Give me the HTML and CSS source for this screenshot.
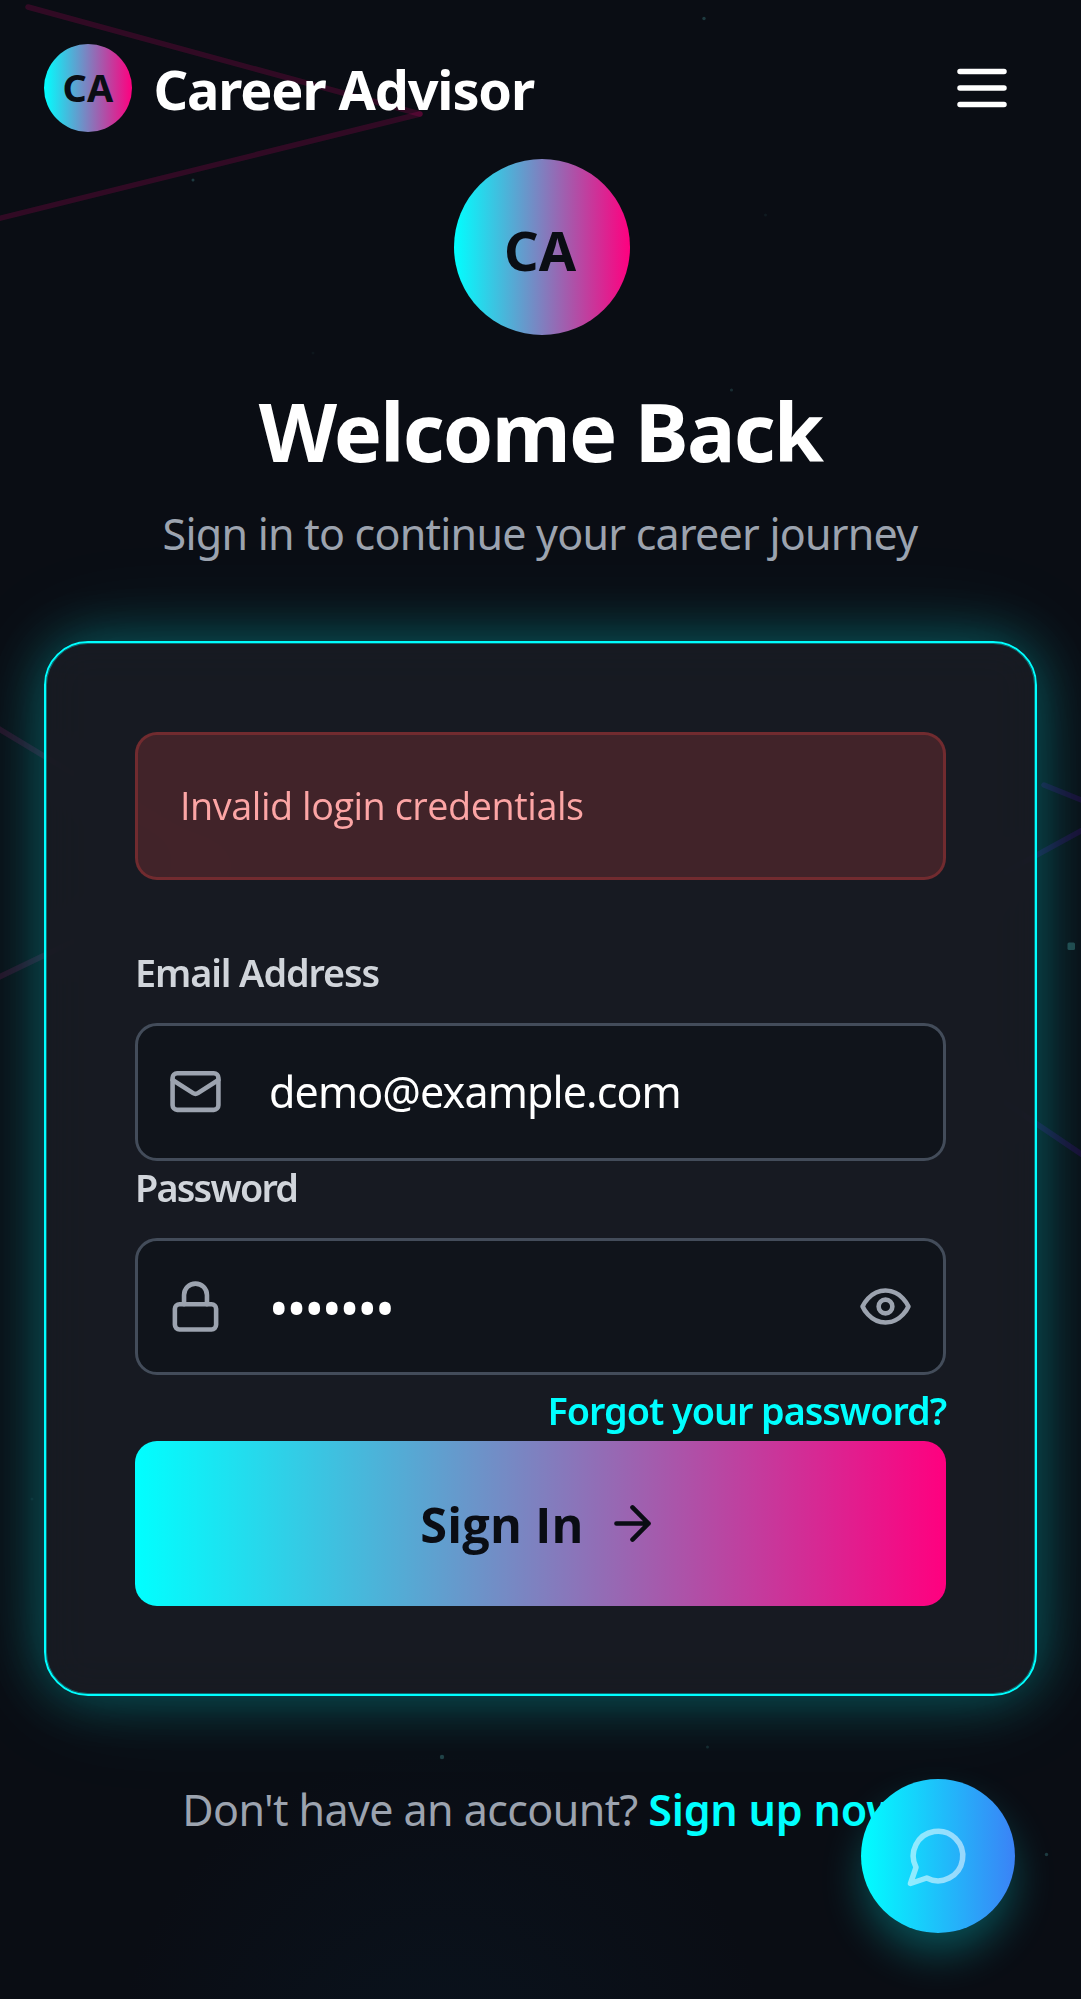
FILE: index.html
```html
<!DOCTYPE html>
<html lang="en">
<head>
<meta charset="utf-8">
<title>Career Advisor</title>
<link rel="stylesheet" href="styles.css">
</head>
<body>
<svg class="backdrop" viewBox="0 0 1081 1999" aria-hidden="true">
  <defs>
    <radialGradient id="floor" cx="442" cy="2080" r="330" gradientUnits="userSpaceOnUse">
      <stop offset="0" stop-color="#083250" stop-opacity=".16"/>
      <stop offset="1" stop-color="#083250" stop-opacity="0"/>
    </radialGradient>
  </defs>
  <rect width="1081" height="1999" fill="url(#floor)"/>
  <g fill="none" stroke-width="5.500" stroke-linecap="round">
    <path d="M28 7 420 114" stroke="#ff007f" stroke-opacity=".16"/>
    <path d="M-5 219.5 420 114" stroke="#ff007f" stroke-opacity=".16"/>
    <path d="M-5 726.5 228 867 -5 979" stroke="#d0208f" stroke-opacity=".14"/>
    <path d="M1044 785 1090 803.500M1090 826 817 975 1090 1160" stroke="#8000ff" stroke-opacity=".13"/>
  </g>
  <g fill="#5cc4c4">
    <rect x="1067.500" y="942.500" width="7.500" height="7.500" rx="1.500" fill-opacity=".3"/>
    <circle cx="704" cy="18.500" r="1.700" fill-opacity=".25"/>
    <circle cx="193" cy="180" r="1.500" fill-opacity=".25"/>
    <circle cx="765.500" cy="215" r="1.500" fill-opacity=".08"/>
    <circle cx="731.500" cy="390" r="1.600" fill-opacity=".18"/>
    <circle cx="313" cy="353" r="1.500" fill-opacity=".05"/>
    <circle cx="32" cy="1499" r="1.500" fill-opacity=".08"/>
    <circle cx="442" cy="1757" r="2.200" fill-opacity=".28"/>
    <circle cx="707.500" cy="1747" r="1.500" fill-opacity=".15"/>
    <circle cx="1046.500" cy="1854.500" r="1.700" fill-opacity=".25"/>
  </g>
</svg>

<header class="topbar">
  <a class="brand">
    <span class="badge badge-small">CA</span>
    <span class="brand-name">Career Advisor</span>
  </a>
  <button class="menu-button" aria-label="Menu">
    <svg class="icon-large" viewBox="0 0 24 24"><path d="M4 6h16M4 12h16M4 18h16"/></svg>
  </button>
</header>

<main class="page">
  <section class="hero">
    <div class="badge badge-large">CA</div>
    <h1 class="title">Welcome Back</h1>
    <p class="subtitle">Sign in to continue your career journey</p>
  </section>

  <form class="card">
    <div class="alert">Invalid login credentials</div>

    <label class="label">Email Address</label>
    <div class="field">
      <svg class="icon" viewBox="0 0 24 24"><rect x="2" y="4" width="20" height="16" rx="2"/><path d="m22 7-8.970 5.700a1.940 1.940 0 0 1-2.060 0L2 7"/></svg>
      <span class="value">demo@example.com</span>
    </div>

    <label class="label label-password">Password</label>
    <div class="field">
      <svg class="icon" viewBox="0 0 24 24"><rect x="3" y="11" width="18" height="11" rx="2"/><path d="M7 11V7a5 5 0 0 1 10 0v4"/></svg>
      <span class="value value-masked">•••••••</span>
      <svg class="icon" viewBox="0 0 24 24"><path d="M2 12s3-7 10-7 10 7 10 7-3 7-10 7-10-7-10-7Z"/><circle cx="12" cy="12" r="3"/></svg>
    </div>

    <a class="forgot">Forgot your password?</a>

    <button class="submit" type="button">
      <span>Sign In</span>
      <svg class="icon" viewBox="0 0 24 24"><path d="M5 12h14M12 5l7 7-7 7"/></svg>
    </button>
  </form>

  <p class="signup">Don't have an account? <a class="signup-link">Sign up now</a></p>
</main>

<button class="chat" aria-label="Chat">
  <svg class="icon-large" viewBox="0 0 24 24"><path d="M7.900 20A9 9 0 1 0 4 16.100L2 22Z"/></svg>
</button>
</body>
</html>
```

FILE: styles.css
```css
* {
  box-sizing: border-box;
}

body {
  position: relative;
  height: 1999px;
  margin: 0;
  overflow: hidden;
  background: #0a0d14;
  color: #fff;
  font-family: "Noto Sans", sans-serif;
}

h1,
p {
  margin: 0;
}

button {
  border: 0;
  padding: 0;
  background: none;
  color: inherit;
  font-family: inherit;
}

.backdrop {
  position: absolute;
  inset: 0;
  z-index: -1;
  width: 1081px;
  height: 1999px;
}

.icon,
.icon-large {
  flex: none;
  width: 55px;
  height: 55px;
  fill: none;
  stroke: currentColor;
  stroke-width: 2;
  stroke-linecap: round;
  stroke-linejoin: round;
}

.icon-large {
  display: block;
  width: 66px;
  height: 66px;
}

.topbar {
  display: flex;
  align-items: center;
  justify-content: space-between;
  height: 159px;
  padding: 44px 66.5px 27px 44px;
}

.brand {
  display: flex;
  align-items: center;
  gap: 21.5px;
}

.brand-name {
  padding-top: 2px;
  font-size: 54px;
  font-weight: 700;
  line-height: 77px;
  letter-spacing: -1.12px;
}

.badge {
  display: flex;
  align-items: center;
  justify-content: center;
  border-radius: 50%;
  background: linear-gradient(90deg, #00ffff, #ff007f);
  color: #0a0d14;
  font-weight: 700;
}

.badge-small {
  width: 88px;
  height: 88px;
  padding-bottom: 1px;
  font-size: 37.8px;
  letter-spacing: 0.4px;
}

.badge-large {
  width: 176px;
  height: 176px;
  padding: 5px 3px 0 0;
  font-size: 54px;
}

.page {
  padding: 0 44px;
}

.hero {
  display: flex;
  flex-direction: column;
  align-items: center;
  padding-left: 2px;
}

.title {
  margin: 45.5px 2px 0 0;
  font-size: 81px;
  font-weight: 700;
  line-height: 99px;
  letter-spacing: -1.75px;
}

.subtitle {
  margin: 21px 3px 0 0;
  color: #9ca3af;
  font-size: 43px;
  line-height: 66px;
  letter-spacing: -0.77px;
}

.card {
  display: flex;
  flex-direction: column;
  margin-top: 74px;
  padding: 89px 89px 88px;
  border: 2px solid #00ffff;
  border-radius: 44px;
  background: rgba(26, 30, 37, 0.8);
  box-shadow: 0 0 55px rgba(0, 255, 255, 0.3), 0 0 110px rgba(0, 255, 255, 0.1),
    inset 0 0 0 1px rgba(0, 255, 255, 0.35);
  backdrop-filter: blur(22px);
}

.alert {
  padding: 43px 42px 44.5px;
  border: 3px solid rgba(239, 68, 68, 0.27);
  border-radius: 22px;
  background: rgba(239, 68, 68, 0.2);
  color: #fca5a5;
  font-family: "Open Sans", sans-serif;
  font-size: 37.8px;
  line-height: 55px;
  letter-spacing: -0.45px;
}

.label {
  margin: 66px 0 24px;
  color: #d1d5db;
  font-size: 37.8px;
  font-weight: 600;
  line-height: 53px;
  letter-spacing: -1.1px;
}

.label-password {
  margin-top: 0;
  letter-spacing: -1.8px;
}

.field {
  display: flex;
  align-items: center;
  height: 137.5px;
  padding: 0 30px;
  border: 3px solid #434c5a;
  border-radius: 22px;
  background: rgba(10, 13, 20, 0.5);
  color: #9ca3af;
}

.value {
  flex: 1;
  margin-left: 46px;
  color: #fff;
  font-size: 43px;
  letter-spacing: -0.9px;
}

.value-masked {
  padding-top: 2px;
  font-size: 52px;
  letter-spacing: -1.85px;
}

.forgot {
  align-self: flex-end;
  margin: 8px 0 3px;
  color: #00ffff;
  font-size: 37.8px;
  font-weight: 600;
  line-height: 55px;
  letter-spacing: -1.06px;
}

.submit {
  display: flex;
  align-items: center;
  justify-content: center;
  gap: 21px;
  height: 165px;
  padding-right: 1px;
  border-radius: 22px;
  background: linear-gradient(90deg, #00ffff, #ff007f);
  color: #0a0d14;
  font-family: "Open Sans", sans-serif;
  font-size: 48.6px;
  font-weight: 700;
  letter-spacing: 0.3px;
}

.signup {
  margin-top: 81px;
  padding-left: 3px;
  color: #9ca3af;
  font-size: 43px;
  line-height: 66px;
  text-align: center;
  letter-spacing: -0.6px;
}

.signup-link {
  color: #00ffff;
  font-weight: 600;
  letter-spacing: -0.2px;
}

/* Floating chat launcher, pinned above the page content */
.chat {
  position: absolute;
  right: 66px;
  bottom: 66px;
  display: grid;
  place-items: center;
  width: 154.5px;
  height: 154.5px;
  border-radius: 50%;
  background: linear-gradient(90deg, #00ffff, #3b82f6);
  box-shadow: 0 22px 44px -4px rgba(0, 255, 255, 0.3);
  color: rgba(255, 255, 255, 0.53);
}
```
